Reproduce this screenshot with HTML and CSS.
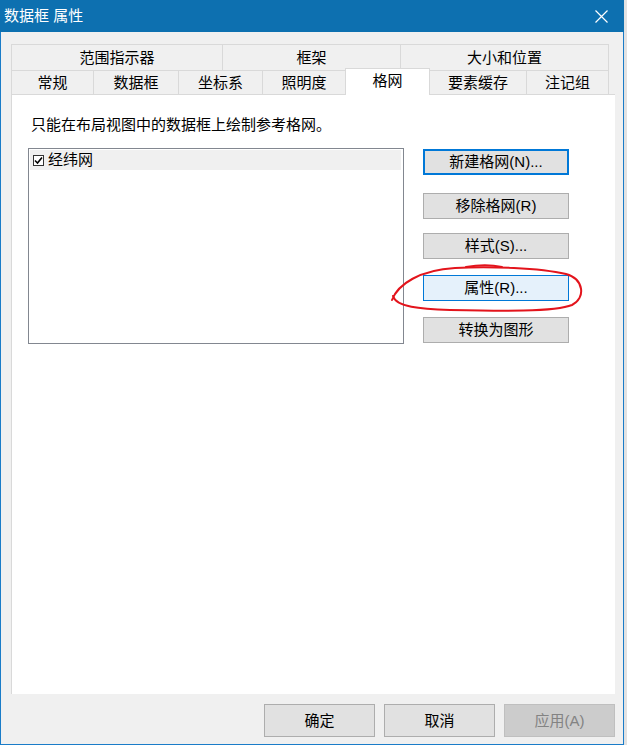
FILE: index.html
```html
<!DOCTYPE html>
<html lang="zh">
<head>
<meta charset="utf-8">
<title>数据框 属性</title>
<link rel="stylesheet" href="styles.css">
</head>
<body>
<div class="window">
  <div class="titlebar">
    <span class="title">数据框 属性</span>
    <svg class="close" width="13" height="13" viewBox="0 0 13 13"><path d="M0.5 0.5 L12.5 12.5 M12.5 0.5 L0.5 12.5" stroke="#fff" stroke-width="1.2" fill="none"/></svg>
  </div>
  <div class="frame">
    <div class="tabs">
      <div class="tabrow row1">
        <div class="tab w212">范围指示器</div>
        <div class="tab w179">框架</div>
        <div class="tab w209">大小和位置</div>
      </div>
      <div class="tabrow row2">
        <div class="tab w83">常规</div>
        <div class="tab w86">数据框</div>
        <div class="tab w85">坐标系</div>
        <div class="tab w84">照明度</div>
        <div class="tab w85 selected">格网</div>
        <div class="tab w98">要素缓存</div>
        <div class="tab w83">注记组</div>
      </div>
    </div>
    <div class="panel">
      <div class="desc">只能在布局视图中的数据框上绘制参考格网。</div>
      <div class="main">
        <div class="listbox">
          <div class="item">
            <span class="check"><svg width="9" height="9" viewBox="0 0 9 9"><path d="M1 4.5 L3.5 7 L8 1.5" stroke="#000" stroke-width="1.6" fill="none"/></svg></span>
            <span class="label">经纬网</span>
          </div>
        </div>
        <div class="buttons">
          <div class="btn focus b1">新建格网(N)...</div>
          <div class="btn b2">移除格网(R)</div>
          <div class="btn b3">样式(S)...</div>
          <div class="btn hover b4">属性(R)...</div>
          <div class="btn b5">转换为图形</div>
        </div>
      </div>
    </div>
    <div class="footer">
      <div class="fbtn">确定</div>
      <div class="fbtn">取消</div>
      <div class="fbtn disabled">应用(A)</div>
    </div>
  </div>
  <svg class="annot" width="627" height="745" viewBox="0 0 627 745">
    <path d="M392 300 C398 284, 420 270, 455 268 C490 266, 540 268, 566 274 C584 279, 586 298, 572 305 C555 312, 500 311, 450 310 C420 309, 396 307, 393 296" stroke="#e3141c" stroke-width="2" fill="none" stroke-linecap="round"/>
    <path d="M466 267 C478 265, 492 265, 502 267" stroke="#e3141c" stroke-width="2" fill="none" stroke-linecap="round"/>
  </svg>
</div>
</body>
</html>
```
FILE: styles.css
```css
html, body {
  margin: 0;
  padding: 0;
}
body {
  background: #e2e2e2;
  font-family: "Liberation Sans", "Noto Sans CJK SC", sans-serif;
  font-size: 15px;
  color: #000;
}
.window {
  position: relative;
  width: 624px;
  height: 745px;
  display: flex;
  flex-direction: column;
}
.titlebar {
  flex: none;
  height: 32px;
  background: #0d70b0;
  color: #fff;
  display: flex;
  align-items: center;
  justify-content: space-between;
  padding: 0 16px 0 4px;
  box-sizing: border-box;
}
.title {
  font-size: 15px;
  line-height: 20px;
}
.close {
  display: block;
}
.frame {
  flex: 1;
  background: #f0f0f0;
  border: 1px solid #1a7cc8;
  border-top: none;
  padding: 12px 8px 0 10px;
  display: flex;
  flex-direction: column;
}
.tabs {
  display: flex;
  flex-direction: column;
}
.tabrow {
  display: flex;
}
.tab {
  box-sizing: border-box;
  border: 1px solid #d9d9d9;
  border-bottom: none;
  margin-left: -1px;
  display: flex;
  align-items: center;
  justify-content: center;
  background: #f0f0f0;
  line-height: 18px;
}
.tab:first-child {
  margin-left: 0;
}
.row1 .tab {
  height: 26px;
}
.row2 {
  height: 24px;
  align-items: flex-end;
}
.row2 .tab {
  height: 24px;
  padding-top: 1px;
}
.row2 .tab.selected {
  height: 27px;
  margin-bottom: -1px;
  padding-top: 0;
  padding-bottom: 2px;
  background: #fff;
  position: relative;
  z-index: 1;
}
.w212 { width: 212px; }
.w179 { width: 179px; }
.w209 { width: 209px; }
.w83 { width: 83px; }
.w86 { width: 86px; }
.w85 { width: 85px; }
.w84 { width: 84px; }
.w98 { width: 98px; }

.panel {
  flex: none;
  box-sizing: border-box;
  width: 604px;
  height: 600px;
  background: #fff;
  border: 1px solid #d9d9d9;
  border-bottom: none;
  border-right: none;
  padding: 20px 0 0 16px;
}
.desc {
  margin-left: 3px;
  line-height: 20px;
}
.main {
  display: flex;
  align-items: flex-start;
  margin-top: 13px;
}
.listbox {
  box-sizing: border-box;
  width: 376px;
  height: 196px;
  border: 1px solid #828790;
  background: #fff;
  padding: 1px 2px 0 1px;
}
.item {
  height: 20px;
  background: #f0f0f0;
  display: flex;
  align-items: center;
}
.check {
  box-sizing: border-box;
  width: 11px;
  height: 11px;
  border: 1px solid #333;
  background: #fff;
  margin-left: 3px;
  display: flex;
  align-items: center;
  justify-content: center;
}
.check svg {
  display: block;
}
.label {
  margin-left: 4px;
  line-height: 18px;
}
.buttons {
  margin-left: 19px;
  margin-top: 1px;
  display: flex;
  flex-direction: column;
}
.btn {
  box-sizing: border-box;
  width: 146px;
  height: 26px;
  border: 1px solid #adadad;
  background: #e1e1e1;
  display: flex;
  align-items: center;
  justify-content: center;
  line-height: 18px;
}
.btn.focus {
  border: 2px solid #0078d7;
}
.btn.hover {
  border-color: #0078d7;
  background: #e5f1fb;
}
.b2 { margin-top: 18px; }
.b3 { margin-top: 14px; }
.b4 { margin-top: 16px; }
.b5 { margin-top: 16px; }

.footer {
  display: flex;
  justify-content: flex-end;
  gap: 9px;
  padding-top: 10px;
}
.fbtn {
  box-sizing: border-box;
  width: 111px;
  height: 33px;
  border: 1px solid #adadad;
  background: #e1e1e1;
  display: flex;
  align-items: center;
  justify-content: center;
  line-height: 18px;
}
.fbtn.disabled {
  background: #cccccc;
  border-color: #bfbfbf;
  color: #838383;
}
.annot {
  position: absolute;
  left: 0;
  top: 0;
  pointer-events: none;
}
```
